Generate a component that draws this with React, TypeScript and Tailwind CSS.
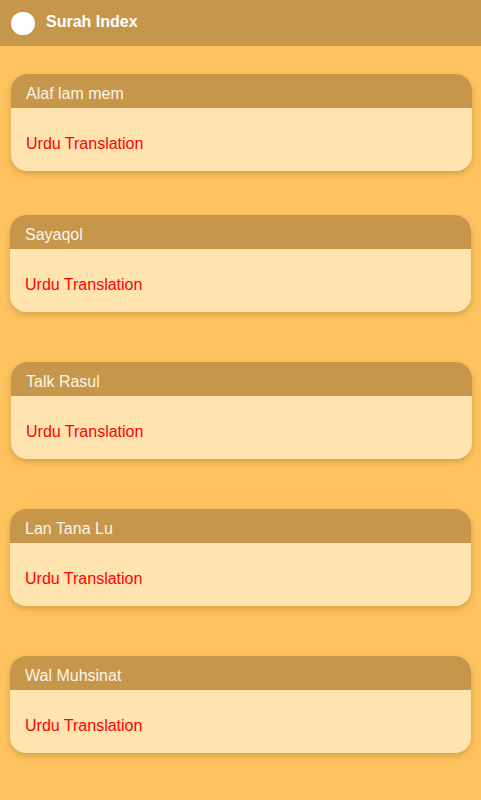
const surahs = [
  { name: "Alaf lam mem", mt: "mt-[28px]", ml: "ml-[11px]" },
  { name: "Sayaqol", mt: "mt-[44px]", ml: "ml-[10px]" },
  { name: "Talk Rasul", mt: "mt-[50px]", ml: "ml-[11px]" },
  { name: "Lan Tana Lu", mt: "mt-[50px]", ml: "ml-[10px]" },
  { name: "Wal Muhsinat", mt: "mt-[50px]", ml: "ml-[10px]" },
];

export default function App() {
  return (
    <div className="w-[481px] h-[800px] bg-[#fec35e] font-['Liberation_Sans',Arial,sans-serif] overflow-hidden">
      {/* header */}
      <div className="h-[46px] bg-[#c6974a] flex items-center pl-[11px]">
        <div className="w-[24px] h-[23px] rounded-full bg-white" />
        <h1 className="ml-[11px] text-white font-bold text-[16px] pb-[2px]">Surah Index</h1>
      </div>

      {/* cards */}
      {surahs.map((s) => (
        <div
          key={s.name}
          className={`${s.mt} ${s.ml} w-[461px] h-[97px] rounded-[16px] overflow-hidden bg-[#ffe4b0] shadow-[0_3px_6px_rgba(150,100,30,0.35)]`}
        >
          <div className="h-[34px] bg-[#c6974a] flex items-center px-[15px] pt-[5px]">
            <p className="text-[#fbf4e8] text-[16px]">{s.name}</p>
          </div>
          <div className="h-[63px] flex items-center px-[15px] pt-[8px]">
            <p className="text-[#ff0000] text-[16px]">Urdu Translation</p>
          </div>
        </div>
      ))}
    </div>
  );
}
